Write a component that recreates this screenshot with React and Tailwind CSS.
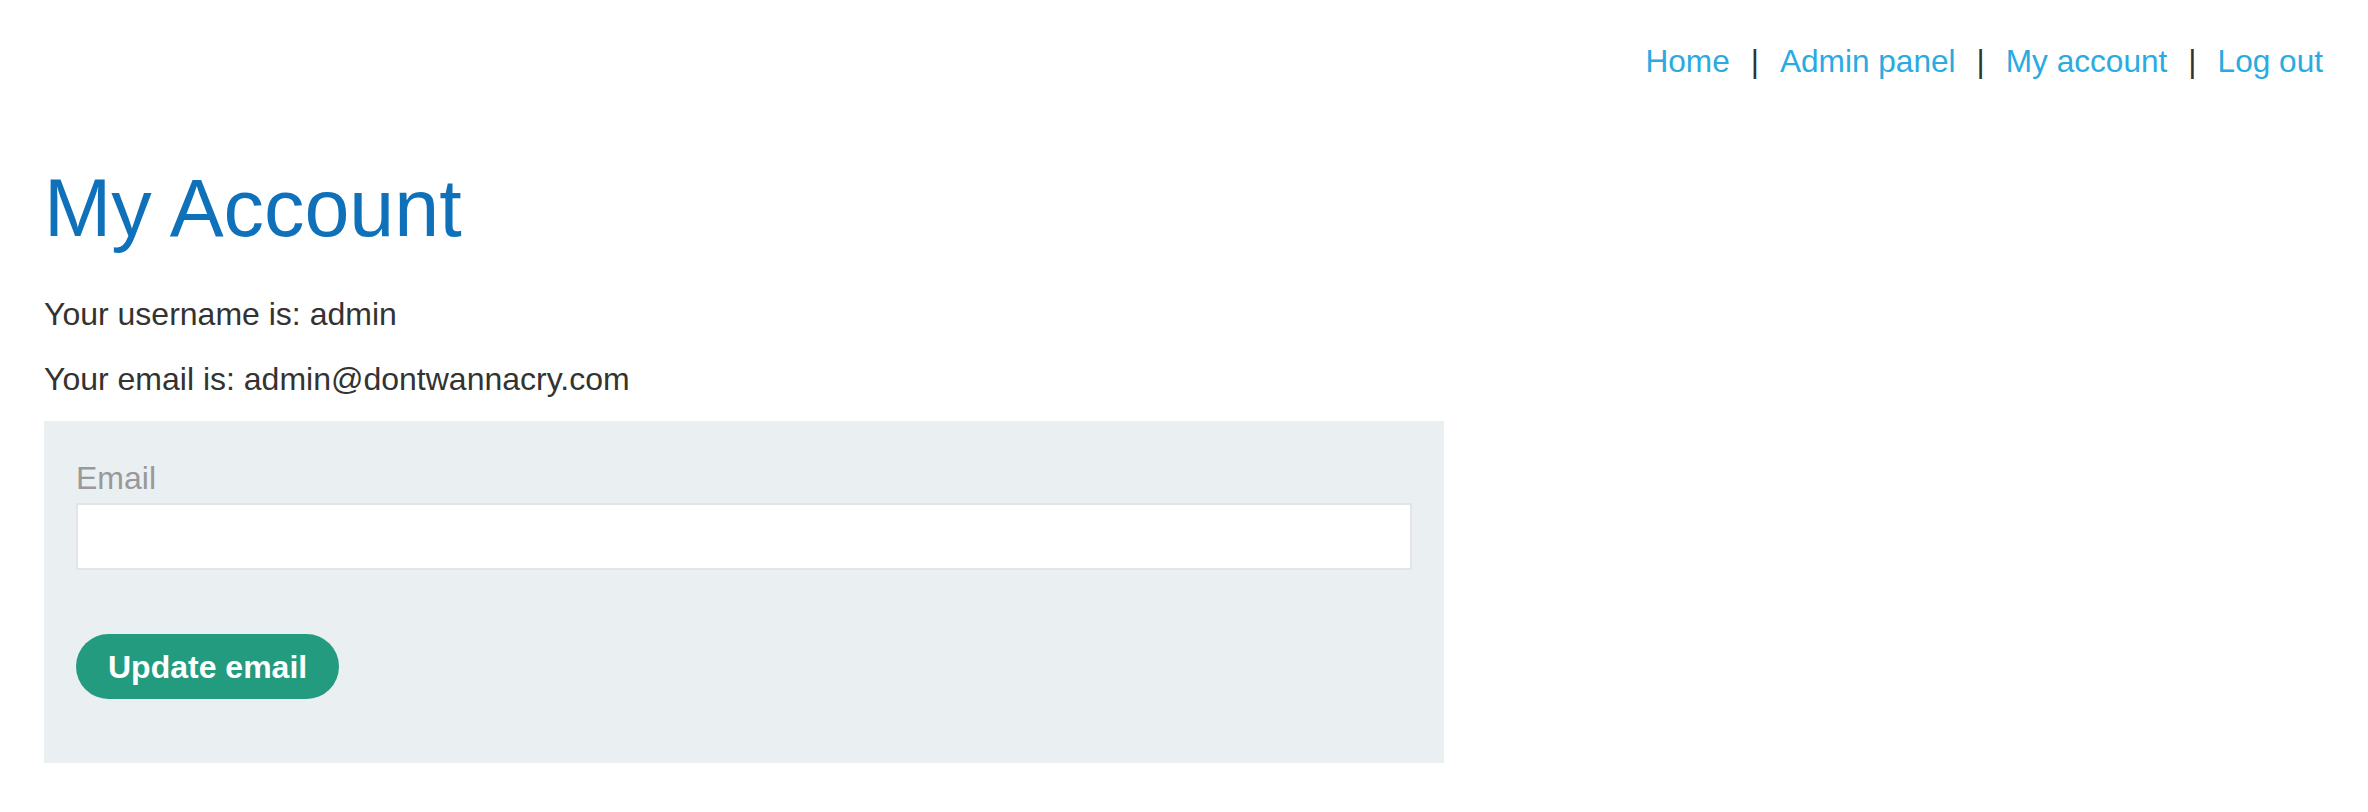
import React from "react";

export default function App() {
  return (
    <div className="min-h-[812px] bg-white font-['Liberation_Sans',Arial,sans-serif] text-[#333332]">
      <header className="flex justify-end pt-[43px] pr-[45px] text-[31.6px] leading-[36px]">
        <a href="#" className="text-[#29abe2]">Home</a>
        <span className="mx-[21px] text-[#333332]">|</span>
        <a href="#" className="text-[#29abe2]">Admin panel</a>
        <span className="mx-[21px] text-[#333332]">|</span>
        <a href="#" className="text-[#29abe2]">My account</a>
        <span className="mx-[21px] text-[#333332]">|</span>
        <a href="#" className="text-[#29abe2]">Log out</a>
      </header>
      <main className="px-[44px]">
        <h1 className="mt-[89px] text-[80.8px] leading-[80px] text-[#0f71b9]">My Account</h1>
        <p className="mt-[48px] text-[32px] leading-[36px]">Your username is: admin</p>
        <p className="mt-[29px] text-[32px] leading-[36px]">Your email is: admin@dontwannacry.com</p>
        <form
          className="mt-[24px] flex w-[1400px] flex-col items-start bg-[#eaeff2] px-[32px] pt-[39px] pb-[64px]"
          onSubmit={(e) => e.preventDefault()}
        >
          <label className="text-[32px] leading-[36px] text-[#999999]">Email</label>
          <input
            type="email"
            className="mt-[7px] h-[67px] w-full border-2 border-[#e3e4e5] bg-white outline-none"
          />
          <button
            type="submit"
            className="mt-[64px] h-[65px] rounded-full bg-[#229b7f] px-[32px] text-[32px] font-bold leading-[36px] text-white"
          >
            Update email
          </button>
        </form>
      </main>
    </div>
  );
}
